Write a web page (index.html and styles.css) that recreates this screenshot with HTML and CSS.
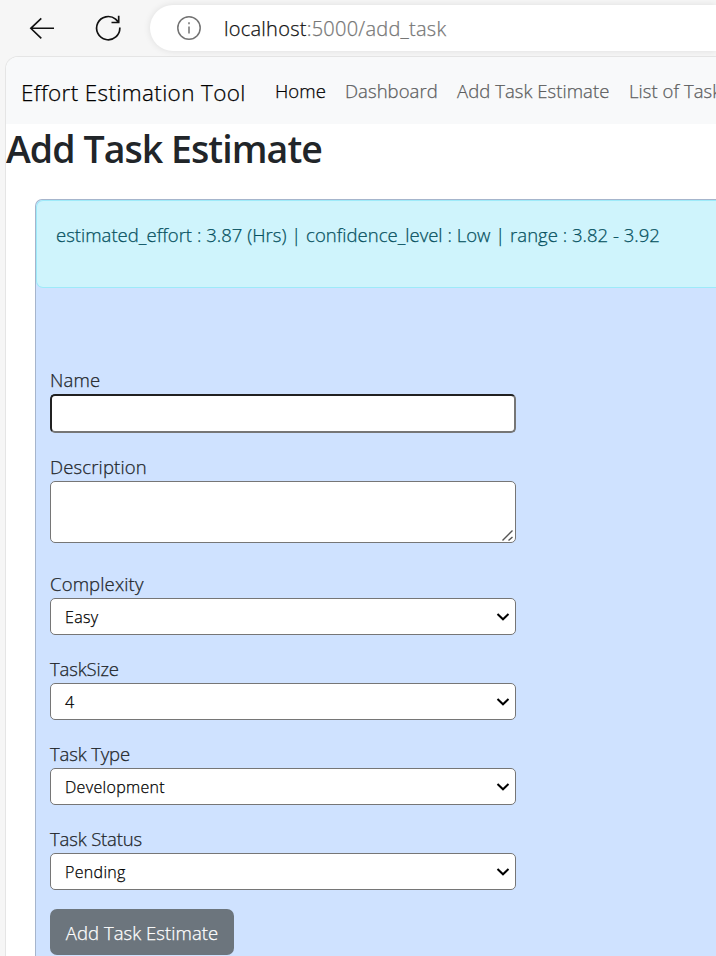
FILE: index.html
```html
<!DOCTYPE html>
<html lang="en">
<head>
<meta charset="utf-8">
<title>Effort Estimation Tool</title>
<link rel="stylesheet" href="styles.css">
</head>
<body>
<header class="toolbar">
  <svg class="back" width="26" height="24" viewBox="0 0 26 24"><path d="M25 12.3H2M12.3 2.3 1.8 12.3l10.500 10"/></svg>
  <svg class="reload" width="26" height="26" viewBox="0 0 26 26"><path d="M24.800 12.500A11.600 11.600 0 1 1 20.600 4.200L23.500 7.200M23.700 .8v6.700H16.500"/></svg>
  <div class="address">
    <svg class="info" width="24" height="24" viewBox="0 0 24 24"><circle cx="12" cy="12" r="11.200"/><path d="M12 10.500v7M12 6.300v2"/></svg>
    <span class="url"><span class="host">localhost</span>:5000/add_task</span>
  </div>
</header>
<main class="page">
  <nav class="navbar">
    <a class="brand">Effort Estimation Tool</a>
    <a class="link active home">Home</a>
    <a class="link dashboard">Dashboard</a>
    <a class="link add">Add Task Estimate</a>
    <a class="link list">List of Task</a>
  </nav>
  <h1>Add Task Estimate</h1>
  <section class="card">
    <div class="alert">estimated_effort : 3.87 (Hrs) | confidence_level : Low | range : 3.82 - 3.92</div>
    <form class="form">
      <label for="name">Name</label>
      <input id="name" class="control name" type="text">
      <label>Description</label>
      <div class="control area"><svg width="12" height="12" viewBox="0 0 12 12"><path d="M.5 11.500 10.500 1.500M6.500 11.500l4-3.500"/></svg></div>
      <label>Complexity</label>
      <div class="control select"><span>Easy</span><svg width="14" height="10" viewBox="0 0 14 10"><path d="m1.500 2 5.500 5.300L12.500 2"/></svg></div>
      <label class="tight">TaskSize</label>
      <div class="control select"><span>4</span><svg width="14" height="10" viewBox="0 0 14 10"><path d="m1.500 2 5.500 5.300L12.500 2"/></svg></div>
      <label class="tight">Task Type</label>
      <div class="control select"><span>Development</span><svg width="14" height="10" viewBox="0 0 14 10"><path d="m1.500 2 5.500 5.300L12.500 2"/></svg></div>
      <label class="tight">Task Status</label>
      <div class="control select"><span>Pending</span><svg width="14" height="10" viewBox="0 0 14 10"><path d="m1.500 2 5.500 5.300L12.500 2"/></svg></div>
      <button class="submit" type="button">Add Task Estimate</button>
    </form>
  </section>
</main>
</body>
</html>
```
FILE: styles.css
```css
* { box-sizing: border-box; }
body {
  margin: 0;
  height: 956px;
  overflow: hidden;
  background: #f6f6f6;
  color: #212529;
  font: 300 18.5px/28px "Open Sans", "Noto Sans", sans-serif;
  -webkit-text-stroke: .25px;
}
svg { fill: none; stroke: currentColor; flex: none; }
.toolbar {
  height: 56px;
  display: flex;
  align-items: center;
  padding-left: 29px;
  color: #111;
}
.back { stroke-width: 1.6; }
.reload { stroke-width: 1.7; margin-left: 40px; }
.address {
  flex: 1;
  height: 46px;
  margin-left: 29px;
  padding-left: 27px;
  display: flex;
  align-items: center;
  white-space: nowrap;
  border-radius: 23px 0 0 23px;
  background: #fff;
  box-shadow: 0 0 7px #0000001a;
}
.info { color: #737373; stroke-width: 1.5; }
.url { margin-left: 23px; padding-top: 2px; font-size: 20px; letter-spacing: .25px; color: #767676; }
.host { color: #111; }
.page {
  height: 900px;
  margin-left: 5px;
  overflow: hidden;
  background: #fff;
  border: solid #e5e5e5;
  border-width: 1px 0 0 1px;
  border-radius: 13px 0 0 0;
}
.navbar {
  height: 67px;
  padding-left: 15px;
  display: flex;
  align-items: center;
  white-space: nowrap;
  background: #f8f9fa;
}
.navbar > * { flex: none; }
.brand { font-size: 22.500px; width: 254px; color: #000; padding-top: 4px; letter-spacing: .36px; }
.link { color: #5c5d5e; letter-spacing: .05px; }
.active { color: #000; }
.home { width: 70px; }
.dashboard { width: 112px; }
.add { width: 172px; }
h1 {
  margin: 0;
  height: 75px;
  font-size: 37.500px;
  line-height: 50px;
  font-weight: 600;
  letter-spacing: -.95px;
  -webkit-text-stroke: 0;
}
.card {
  height: 790px;
  margin-left: 29px;
  background: #cfe2ff;
  border: solid #a6b5cc;
  border-width: 1px 0 0 1px;
  border-radius: 7px 0 0 0;
}
.alert {
  height: 88px;
  padding: 20px 0 0 19px;
  white-space: nowrap;
  letter-spacing: .02px;
  color: #055160;
  background: #cff4fc;
  border: 1px solid #9eeaf9;
  border-right: 0;
  border-radius: 7px 0 0 7px;
}
.form {
  width: 480px;
  padding: 78px 0 0 14px;
  display: flex;
  flex-direction: column;
}
label { height: 28px; letter-spacing: .15px; }
.tight { letter-spacing: -.15px; }
.control {
  width: 466px;
  margin: 0 0 20px;
  background: #fff;
  border: 1px solid #767676;
  border-radius: 5px;
}
.name { height: 39px; border: 2px inset #767676; outline: 0; }
.area {
  height: 62px;
  margin-bottom: 27px;
  display: flex;
  align-items: flex-end;
  justify-content: flex-end;
  padding: 1px;
  color: #555;
}
.area svg { stroke-width: 1.4; }
.select {
  height: 37px;
  display: flex;
  align-items: center;
  justify-content: space-between;
  padding: 0 5px 0 14px;
  font-size: 16px;
  letter-spacing: .32px;
  color: #000;
}
.select svg { stroke-width: 2; }
.submit {
  width: 184px;
  height: 46px;
  margin-top: -1px;
  padding: 2px 0 0;
  border: 0;
  border-radius: 7px;
  background: #6c757d;
  color: #fff;
  font: inherit;
  letter-spacing: .05px;
}
```
